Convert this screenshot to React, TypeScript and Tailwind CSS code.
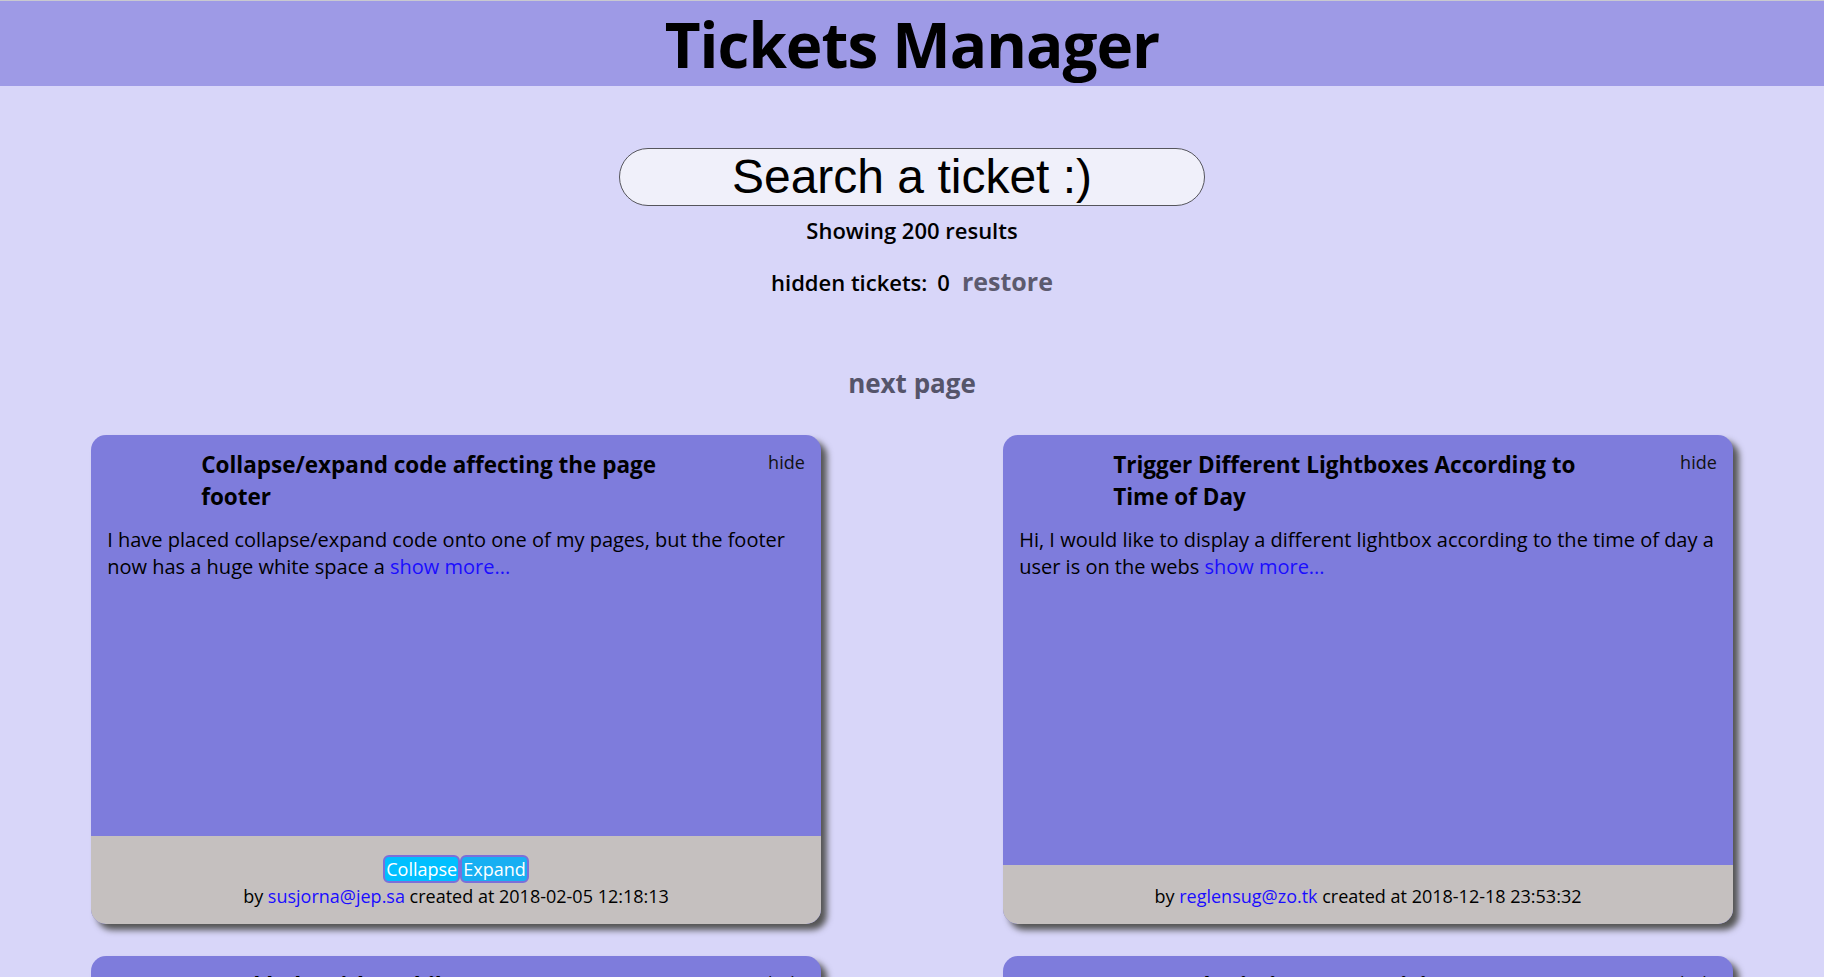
import React, { useState } from "react";

type Ticket = {
  id: string;
  title: string;
  content: string;
  userEmail: string;
  creationTime: string;
  long?: boolean;
};

const tickets: Ticket[] = [
  {
    id: "1",
    title: "Collapse/expand code affecting the page footer",
    content:
      "I have placed collapse/expand code onto one of my pages, but the footer now has a huge white space a",
    userEmail: "susjorna@jep.sa",
    creationTime: "2018-02-05 12:18:13",
    long: true,
  },
  {
    id: "2",
    title: "Trigger Different Lightboxes According to Time of Day",
    content:
      "Hi, I would like to display a different lightbox according to the time of day a user is on the webs",
    userEmail: "reglensug@zo.tk",
    creationTime: "2018-12-18 23:53:32",
  },
  {
    id: "3",
    title: "Need help with mobile menu",
    content: "The menu on my mobile site does not open when I tap on it, any idea wh",
    userEmail: "nunel@de.ly",
    creationTime: "2018-03-11 09:41:02",
  },
  {
    id: "4",
    title: "Form submissions not arriving",
    content: "Hello, I set up a contact form last week and none of the submissions ar",
    userEmail: "ovocagi@ba.gd",
    creationTime: "2018-07-23 17:05:48",
  },
];

const TicketCard = ({ ticket }: { ticket: Ticket }) => {
  return (
    <li className="w-[40%] h-[489px] mb-[32px] flex flex-col rounded-[15px] overflow-hidden bg-[#7e7cdc] shadow-[6px_6px_6px_#555]">
      {/* Head */}
      <div className="flex-1 px-4 pt-[14px]">
        <div className="flex items-start">
          <h3 className="ml-[94px] w-[490px] text-[22.5px] leading-[32px] font-bold text-black">
            {ticket.title}
          </h3>
          <span className="ml-auto text-[18px] leading-[26px] text-[#111] cursor-pointer">
            hide
          </span>
        </div>
        <p className="mt-[14px] text-[20px] leading-[26.7px] text-black">
          {ticket.content}{" "}
          <a className="text-[#1a0dff] cursor-pointer">show more...</a>
        </p>
      </div>

      {/* Footer */}
      <footer className="bg-[#c5c0bf] pt-[19px] pb-[16px] flex flex-col items-center text-[18px] leading-[24px] text-black">
        {ticket.long && (
          <div className="flex mb-[1px]">
            <button className="h-[28px] px-[1px] rounded-[6px] border-2 border-[#7b6fd9] bg-[#00bfff] text-white text-[18px] leading-[22px]">
              Collapse
            </button>
            <button className="h-[28px] px-[1px] rounded-[6px] border-2 border-[#7b6fd9] bg-[#18aff2] text-white text-[18px] leading-[22px]">
              Expand
            </button>
          </div>
        )}
        <div>
          by <a className="text-[#1a0dff]">{ticket.userEmail}</a> created at{" "}
          {ticket.creationTime}
        </div>
      </footer>
    </li>
  );
};

export default function App() {
  const [search, setSearch] = useState("");

  return (
    <main className="min-h-screen bg-[#d8d6f9] font-['Open_Sans',sans-serif] text-black">
      <header className="border-t border-[#c9c9d0] bg-[#9e9ae6] h-[86px] flex justify-center overflow-visible">
        <h1 className="text-[62px] leading-[86px] font-bold tracking-[-1px]">Tickets Manager</h1>
      </header>

      <div className="flex flex-col items-center">
        <input
          className="mt-[62px] w-[586px] h-[58px] rounded-full border-[1.5px] border-[#55555c] bg-[#f0f0fa] text-center text-[48px] font-['Liberation_Sans',Arial,sans-serif] placeholder:text-black outline-none"
          placeholder="Search a ticket :)"
          value={search}
          onChange={(e) => setSearch(e.target.value)}
        />
        <div className="mt-[10px] text-[22px] leading-[28px] font-semibold">Showing 200 results</div>
        <div className="mt-[22px] flex items-baseline text-[22px] leading-[30px] font-semibold">
          <span>hidden tickets:</span>
          <span className="ml-[10px]">0</span>
          <a className="ml-[12px] text-[25px] font-bold text-[#5c5a6e] cursor-pointer">restore</a>
        </div>
        <a className="mt-[70px] text-[26px] leading-[32px] font-bold text-[#55546a] cursor-pointer">next page</a>
      </div>

      <ul className="mt-[36px] flex flex-wrap justify-around">
        {tickets.map((t) => (
          <TicketCard key={t.id} ticket={t} />
        ))}
      </ul>
    </main>
  );
}
